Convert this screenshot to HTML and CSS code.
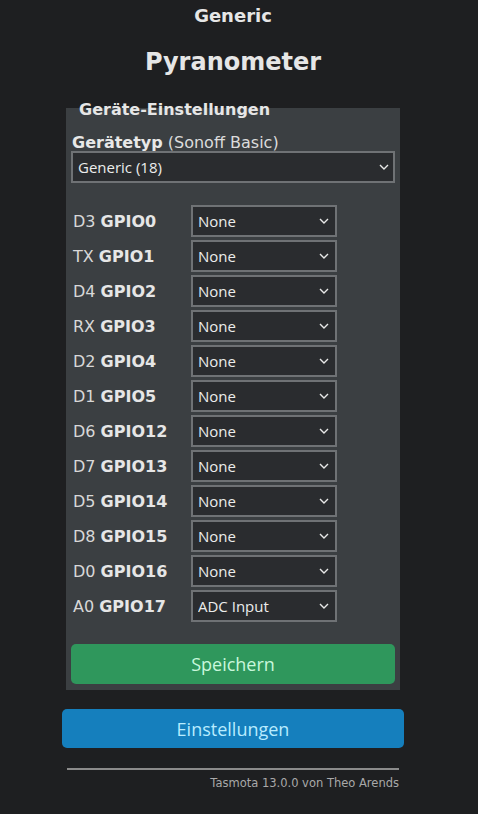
FILE: index.html
```html
<!DOCTYPE html>
<html lang="de">
<head>
<meta charset="utf-8">
<title>Generic - Vorlage</title>
<link rel="stylesheet" href="styles.css">
</head>
<body>
<div class="page">
  <div class="head">
    <h3 class="dev">Generic</h3>
    <h2 class="name">Pyranometer</h2>
  </div>
  <fieldset class="box">
    <legend class="legend">Geräte-Einstellungen</legend>
    <p class="type"><b>Gerätetyp</b> (Sonoff Basic)</p>
    <div class="sel sel-wide">
      <select><option>Generic (18)</option></select>
      <svg class="chev" viewBox="0 0 10 6" width="10" height="6"><path d="M1 1 L5 5 L9 1" fill="none" stroke="#e8e8e8" stroke-width="1.4"/></svg>
    </div>
    <div class="rows">
      <div class="row"><span class="lbl">D3 <b>GPIO0</b></span><div class="sel"><select><option>None</option></select><svg class="chev" viewBox="0 0 10 6" width="10" height="6"><path d="M1 1 L5 5 L9 1" fill="none" stroke="#e8e8e8" stroke-width="1.4"/></svg></div></div>
      <div class="row"><span class="lbl">TX <b>GPIO1</b></span><div class="sel"><select><option>None</option></select><svg class="chev" viewBox="0 0 10 6" width="10" height="6"><path d="M1 1 L5 5 L9 1" fill="none" stroke="#e8e8e8" stroke-width="1.4"/></svg></div></div>
      <div class="row"><span class="lbl">D4 <b>GPIO2</b></span><div class="sel"><select><option>None</option></select><svg class="chev" viewBox="0 0 10 6" width="10" height="6"><path d="M1 1 L5 5 L9 1" fill="none" stroke="#e8e8e8" stroke-width="1.4"/></svg></div></div>
      <div class="row"><span class="lbl">RX <b>GPIO3</b></span><div class="sel"><select><option>None</option></select><svg class="chev" viewBox="0 0 10 6" width="10" height="6"><path d="M1 1 L5 5 L9 1" fill="none" stroke="#e8e8e8" stroke-width="1.4"/></svg></div></div>
      <div class="row"><span class="lbl">D2 <b>GPIO4</b></span><div class="sel"><select><option>None</option></select><svg class="chev" viewBox="0 0 10 6" width="10" height="6"><path d="M1 1 L5 5 L9 1" fill="none" stroke="#e8e8e8" stroke-width="1.4"/></svg></div></div>
      <div class="row"><span class="lbl">D1 <b>GPIO5</b></span><div class="sel"><select><option>None</option></select><svg class="chev" viewBox="0 0 10 6" width="10" height="6"><path d="M1 1 L5 5 L9 1" fill="none" stroke="#e8e8e8" stroke-width="1.4"/></svg></div></div>
      <div class="row"><span class="lbl">D6 <b>GPIO12</b></span><div class="sel"><select><option>None</option></select><svg class="chev" viewBox="0 0 10 6" width="10" height="6"><path d="M1 1 L5 5 L9 1" fill="none" stroke="#e8e8e8" stroke-width="1.4"/></svg></div></div>
      <div class="row"><span class="lbl">D7 <b>GPIO13</b></span><div class="sel"><select><option>None</option></select><svg class="chev" viewBox="0 0 10 6" width="10" height="6"><path d="M1 1 L5 5 L9 1" fill="none" stroke="#e8e8e8" stroke-width="1.4"/></svg></div></div>
      <div class="row"><span class="lbl">D5 <b>GPIO14</b></span><div class="sel"><select><option>None</option></select><svg class="chev" viewBox="0 0 10 6" width="10" height="6"><path d="M1 1 L5 5 L9 1" fill="none" stroke="#e8e8e8" stroke-width="1.4"/></svg></div></div>
      <div class="row"><span class="lbl">D8 <b>GPIO15</b></span><div class="sel"><select><option>None</option></select><svg class="chev" viewBox="0 0 10 6" width="10" height="6"><path d="M1 1 L5 5 L9 1" fill="none" stroke="#e8e8e8" stroke-width="1.4"/></svg></div></div>
      <div class="row"><span class="lbl">D0 <b>GPIO16</b></span><div class="sel"><select><option>None</option></select><svg class="chev" viewBox="0 0 10 6" width="10" height="6"><path d="M1 1 L5 5 L9 1" fill="none" stroke="#e8e8e8" stroke-width="1.4"/></svg></div></div>
      <div class="row"><span class="lbl">A0 <b>GPIO17</b></span><div class="sel"><select><option>ADC Input</option></select><svg class="chev" viewBox="0 0 10 6" width="10" height="6"><path d="M1 1 L5 5 L9 1" fill="none" stroke="#e8e8e8" stroke-width="1.4"/></svg></div></div>
    </div>
    <button class="btn btn-save">Speichern</button>
  </fieldset>
  <button class="btn btn-cfg">Einstellungen</button>
  <hr class="rule">
  <div class="foot">Tasmota 13.0.0 von Theo Arends</div>
</div>
</body>
</html>
```

FILE: styles.css
```css
* { box-sizing: border-box; }
html, body {
  margin: 0;
  padding: 0;
  background: #1e1f21;
  height: 100%;
}
body {
  font-family: "DejaVu Sans", Verdana, sans-serif;
  color: #eaeaea;
}
.page {
  width: 342px;
  margin-left: 62px;
}
.head {
  text-align: center;
}
.dev {
  margin: 0;
  padding-top: 3px;
  font-size: 18px;
  line-height: 26px;
  font-weight: bold;
  color: #e6e6e6;
}
.name {
  margin: 0;
  padding-top: 17px;
  font-size: 24px;
  line-height: 32px;
  font-weight: bold;
  color: #e6e6e6;
}
.box {
  margin: 18px 4px 0 4px;
  padding: 0 5px 6px 5px;
  border: none;
  background: #3b3f42;
  min-width: 0;
}
.legend {
  padding: 4px 8px 0 8px;
  font-size: 16px;
  line-height: 20px;
  font-weight: bold;
  color: #e6e6e6;
}
.type {
  margin: 15px 0 0 1px;
  font-size: 16px;
  line-height: 16px;
  color: #dcdcdc;
}
.type b { color: #e8e8e8; }
.sel {
  position: relative;
  width: 146px;
  height: 32px;
}
.sel-wide {
  width: 100%;
}
.sel select {
  -webkit-appearance: none;
  appearance: none;
  width: 100%;
  height: 100%;
  margin: 0;
  padding: 0 0 0 5px;
  border: 2px solid #6f7275;
  border-radius: 0;
  background: #2a2c2f;
  color: #ececec;
  font-family: "Open Sans", "Noto Sans", sans-serif;
  font-size: 15px;
}
.chev {
  position: absolute;
  right: 8px;
  top: 13px;
  pointer-events: none;
}
.sel-wide .chev {
  right: 6px;
}
.rows {
  margin-top: 22px;
  display: flex;
  flex-direction: column;
  gap: 3px;
}
.row {
  display: flex;
  align-items: center;
}
.lbl {
  width: 120px;
  padding-left: 2px;
  font-size: 16px;
  color: #d8d8d8;
  white-space: nowrap;
}
.lbl b { color: #e6e6e6; }
.btn {
  display: block;
  width: 100%;
  border: none;
  border-radius: 5px;
  font-family: "Open Sans", "Noto Sans", sans-serif;
  font-size: 18px;
  cursor: pointer;
}
.btn-save {
  margin-top: 22px;
  height: 40px;
  background: #2f975c;
  color: #c9f7dc;
}
.btn-cfg {
  margin-top: 19px;
  height: 39px;
  background: #157fbd;
  color: #b8ecff;
}
.rule {
  margin: 20px 5px 0 5px;
  border: none;
  border-top: 2px solid #8b8b8b;
  height: 0;
}
.foot {
  margin-top: 5px;
  padding-right: 5px;
  text-align: right;
  font-size: 11.5px;
  line-height: 16px;
  color: #a9a9a9;
}
```
